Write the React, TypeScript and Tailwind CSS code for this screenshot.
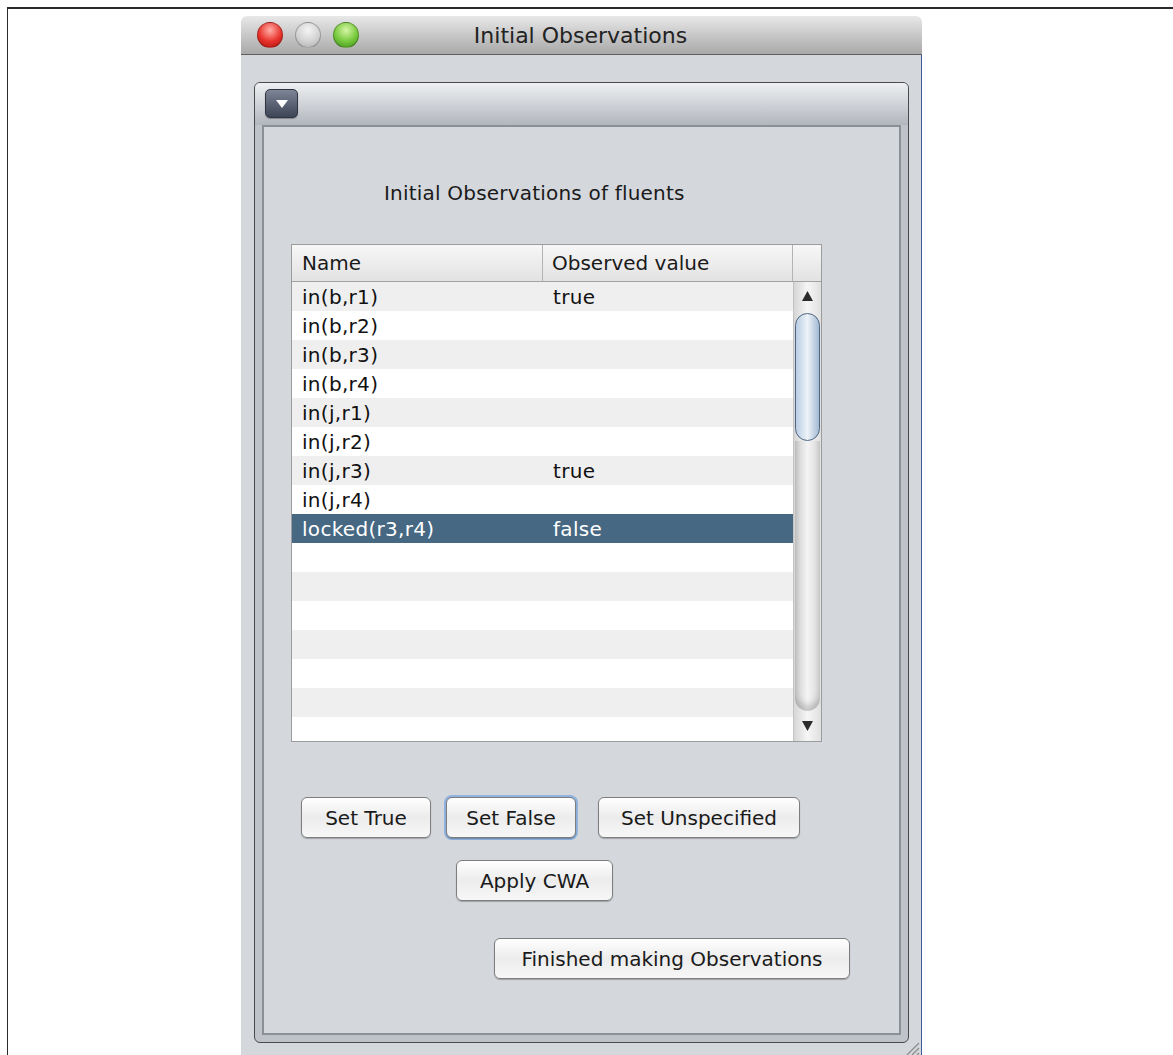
import React from 'react';

type Row = { name: string; value: string };

const rows: Row[] = [
    { name: 'in(b,r1)', value: 'true' },
    { name: 'in(b,r2)', value: '' },
    { name: 'in(b,r3)', value: '' },
    { name: 'in(b,r4)', value: '' },
    { name: 'in(j,r1)', value: '' },
    { name: 'in(j,r2)', value: '' },
    { name: 'in(j,r3)', value: 'true' },
    { name: 'in(j,r4)', value: '' },
    { name: 'locked(r3,r4)', value: 'false' },
];

const SELECTED = 8;
const TOTAL_ROWS = 16;

const AquaButton = ({ label, width, focused }: { label: string; width: string; focused?: boolean }) => (
    <div className={focused ? 'rounded-[8px] p-[2px] bg-[#8fb2de]' : 'p-0'}>
        <button
            className={`${width} h-[41px] rounded-[6px] border border-[#7d7d7d] bg-gradient-to-b from-[#ffffff] via-[#ececec] to-[#f7f7f7] text-[20px] text-[#1a1a1a] shadow-[0_1px_1px_rgba(0,0,0,0.25)]`}
        >
            {label}
        </button>
    </div>
);

const TrafficLight = ({ color }: { color: string }) => (
    <div className={`w-[26px] h-[26px] rounded-full border border-[#00000040] ${color}`} />
);

const ObservationsTable = () => {
    return (
        <div className="w-[531px] h-[498px] border border-[#9c9c9c] bg-white flex flex-col overflow-hidden">
            {/* header */}
            <div className="h-[37px] shrink-0 grid grid-cols-[251px_250px_28px] border-b border-[#a3a3a3] bg-gradient-to-b from-[#f7f7f7] to-[#e2e2e2] text-[20px] text-[#1a1a1a]">
                <div className="pl-[10px] flex items-center border-r border-[#b3b3b3]">Name</div>
                <div className="pl-[9px] flex items-center border-r border-[#b3b3b3]">Observed value</div>
                <div />
            </div>

            <div className="flex flex-1 min-h-0">
                <div className="w-[501px] flex flex-col overflow-hidden">
                    {Array.from({ length: TOTAL_ROWS }).map((_, i) => {
                        const row = rows[i];
                        const selected = i === SELECTED;
                        const bg = selected ? 'bg-[#466883] text-white' : i % 2 === 0 ? 'bg-[#efefef] text-[#111]' : 'bg-white text-[#111]';
                        return (
                            <div key={i} className={`h-[29px] shrink-0 grid grid-cols-[251px_250px] items-center text-[20px] leading-none tracking-[0.3px] ${bg}`}>
                                <div className="pl-[10px]">{row?.name}</div>
                                <div className="pl-[10px]">{row?.value}</div>
                            </div>
                        );
                    })}
                </div>

                {/* scrollbar */}
                <div className="w-[28px] flex flex-col border-l border-[#c4c4c4] bg-gradient-to-r from-[#d6d6d6] via-[#f6f6f6] to-[#e0e0e0]">
                    <div className="h-[31px] shrink-0 flex items-start justify-center pt-[9px]">
                        <svg width="11" height="10" viewBox="0 0 11 10">
                            <path d="M5.5 0 L11 10 L0 10 Z" fill="#2b2b2b" />
                        </svg>
                    </div>
                    <div className="flex-1 flex flex-col px-[1px]">
                        <div className="h-[128px] rounded-full border border-[#4f6580] bg-gradient-to-r from-[#b9cde2] via-[#eef3f9] to-[#a3bad4]" />
                        <div className="flex-1 rounded-b-full bg-gradient-to-r from-[#cdcdcd] via-[#f4f4f4] to-[#d8d8d8] shadow-[inset_0_-6px_6px_rgba(0,0,0,0.18)]" />
                    </div>
                    <div className="h-[30px] shrink-0 flex items-center justify-center">
                        <svg width="11" height="10" viewBox="0 0 11 10">
                            <path d="M0 0 L11 0 L5.5 10 Z" fill="#2b2b2b" />
                        </svg>
                    </div>
                </div>
            </div>
        </div>
    );
};

const App = () => {
    return (
        <div className="h-[1055px] overflow-hidden bg-white pt-[7px] pl-[7px] font-['DejaVu_Sans',sans-serif]">
            <div className="h-full border-t-2 border-l border-[#2a2a2a] pl-[233px] pt-[7px]">
                {/* window */}
                <div className="relative w-[681px] h-[1060px] flex flex-col">
                    <div className="h-[39px] shrink-0 rounded-t-[6px] bg-gradient-to-b from-[#e8e8e8] to-[#a9a9a9] border-b border-[#5e5e5e] flex items-center px-[16px] relative">
                        <div className="flex gap-[12px]">
                            <TrafficLight color="bg-[radial-gradient(circle_at_50%_30%,#ffb0a8,#e8332c_55%,#a8110e)]" />
                            <TrafficLight color="bg-[radial-gradient(circle_at_50%_30%,#f4f4f4,#d3d3d3_55%,#a9a9a9)]" />
                            <TrafficLight color="bg-[radial-gradient(circle_at_50%_30%,#d6f5a6,#77c93c_55%,#3b8a1a)]" />
                        </div>
                        <div className="flex-1 text-center text-[22px] text-[#222] pr-[112px] pl-[8px]">Initial Observations</div>
                    </div>

                    <div className="flex-1 bg-[#d4d7dc] border-r border-[#3a5b93] pl-[13px] pr-[12px] pt-[27px]">
                        {/* collapsible panel */}
                        <div className="w-[655px] h-[961px] rounded-[6px] border border-[#4a4a4a] bg-[#bfc3c9] flex flex-col overflow-hidden">
                            <div className="h-[42px] shrink-0 bg-gradient-to-b from-[#eef0f2] to-[#b2b6bd] pl-[10px] pt-[6px]">
                                <div className="w-[33px] h-[29px] rounded-[5px] border border-[#2f3543] bg-gradient-to-b from-[#7d8597] to-[#3d4556] flex items-center justify-center shadow-[0_1px_1px_rgba(0,0,0,0.3)]">
                                    <svg width="12" height="8" viewBox="0 0 12 8">
                                        <path d="M0 0 L12 0 L6 8 Z" fill="#ffffff" />
                                    </svg>
                                </div>
                            </div>
                            <div className="flex-1 px-[7px] pb-[7px]">
                                <div className="h-[910px] border-2 border-[#8b9098] bg-[#d4d7dc] flex flex-col">
                                    <div className="mt-[54px] pl-[120px] text-[20px] leading-[24px] tracking-[0.2px] text-[#1a1a1a]">
                                        Initial Observations of fluents
                                    </div>

                                    <div className="mt-[39px] ml-[27px]">
                                        <ObservationsTable />
                                    </div>

                                    <div className="mt-[53px] pl-[37px] flex items-center">
                                        <AquaButton label="Set True" width="w-[130px]" />
                                        <div className="ml-[13px]">
                                            <AquaButton label="Set False" width="w-[130px]" focused />
                                        </div>
                                        <div className="ml-[20px]">
                                            <AquaButton label="Set Unspecified" width="w-[202px]" />
                                        </div>
                                    </div>

                                    <div className="mt-[20px] pl-[192px] flex">
                                        <AquaButton label="Apply CWA" width="w-[157px]" />
                                    </div>

                                    <div className="mt-[37px] pl-[230px] flex">
                                        <AquaButton label="Finished making Observations" width="w-[356px]" />
                                    </div>
                                </div>
                            </div>
                        </div>
                    </div>

                    {/* resize grip */}
                    <svg className="absolute right-[2px] top-[1022px]" width="18" height="18" viewBox="0 0 18 18">
                        <path d="M17 5 L5 17 M17 10 L10 17 M17 15 L15 17" stroke="#8a8a8a" strokeWidth="1.2" />
                    </svg>
                </div>
            </div>
        </div>
    );
};

export default App;
